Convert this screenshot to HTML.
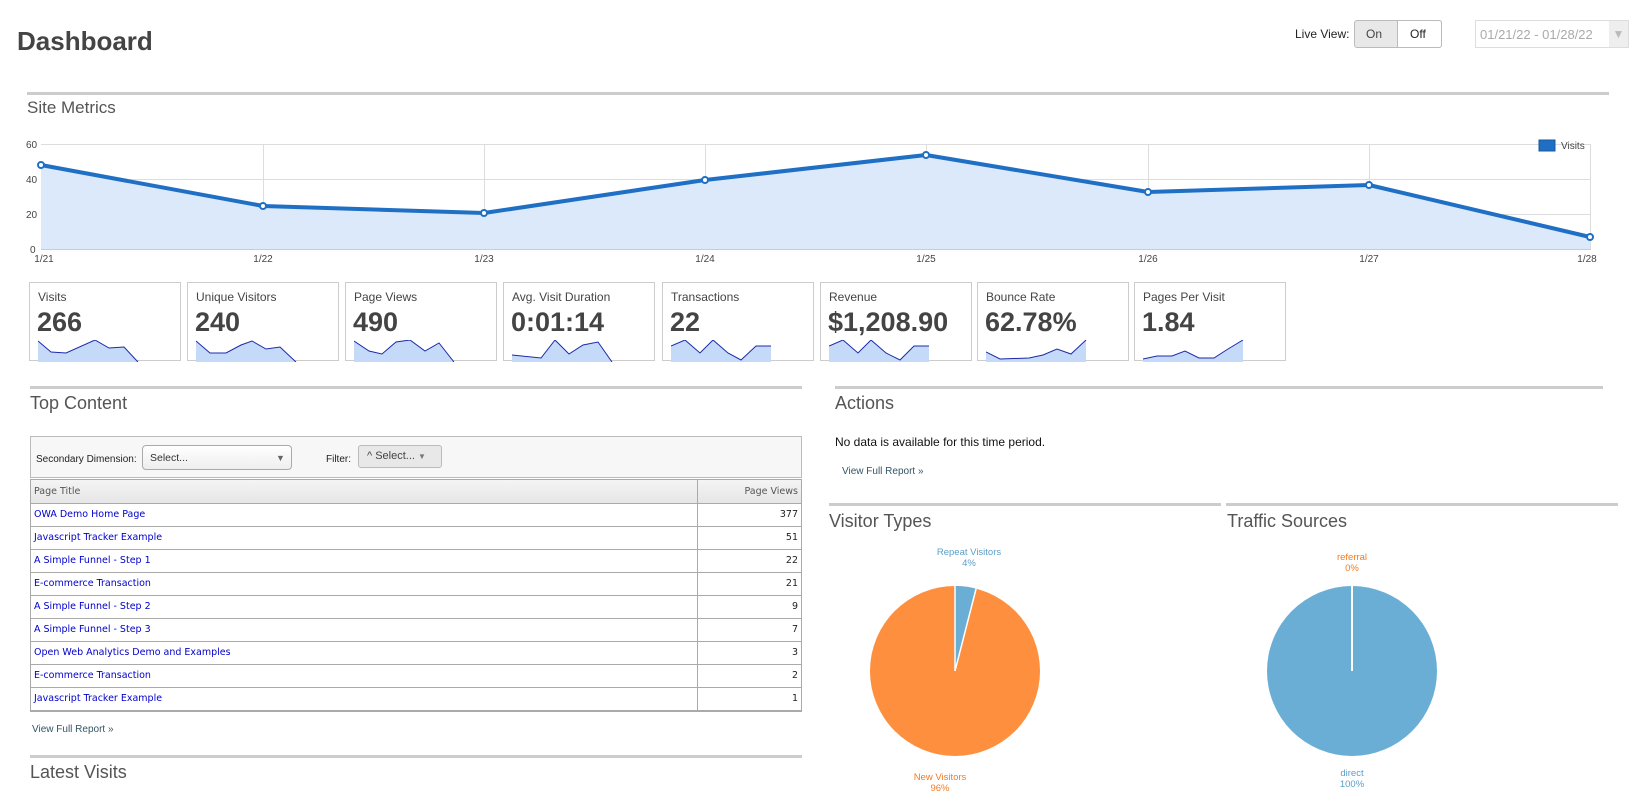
<!DOCTYPE html>
<html><head><meta charset="utf-8">
<style>
*{margin:0;padding:0;box-sizing:border-box}
body{width:1642px;height:802px;background:#fff;font-family:"Liberation Sans",Arial,sans-serif;color:#333;position:relative;overflow:hidden}
.a{position:absolute}
.rule{position:absolute;height:3px;background:#ccc}
.h2{position:absolute;font-size:18px;color:#555}
.box{position:absolute;top:282px;width:152px;height:79px;border:1px solid #ccc;background:#fff}
.box .t{position:absolute;left:8px;top:7px;font-size:12px;color:#444}
.box .n{position:absolute;left:7px;top:24px;font-size:27px;font-weight:bold;color:#444}
.box svg{position:absolute;left:8px;top:57px}
.tbl{position:absolute;left:30px;top:479px;width:772px;border:1px solid #aaa;border-bottom:2px solid #aaa;font-family:"DejaVu Sans",Verdana,sans-serif;font-size:9.5px}
.row{height:23px;border-top:1px solid #aaa;position:relative;line-height:22px}
.row .c1{position:absolute;left:3px;color:#00c}
.row .c2{position:absolute;right:3px;color:#222}
.row .d{position:absolute;left:666px;top:0;bottom:0;border-left:1px solid #aaa}
.link{position:absolute;font-size:10px;color:#356}
</style></head><body>

<div class="a" style="left:17px;top:26px;font-size:26px;font-weight:bold;color:#444">Dashboard</div>
<div class="a" style="left:1295px;top:27px;font-size:12px;color:#222">Live View:</div>
<div class="a" style="left:1354px;top:20px;width:88px;height:28px;border:1px solid #bbb;border-radius:3px;background:#e8e8e8"></div>
<div class="a" style="left:1397px;top:20px;width:45px;height:28px;border:1px solid #bbb;border-radius:0 3px 3px 0;background:#fff"></div>
<div class="a" style="left:1366px;top:27px;font-size:12px;color:#444">On</div>
<div class="a" style="left:1410px;top:27px;font-size:12px;color:#222">Off</div>
<div class="a" style="left:1475px;top:20px;width:154px;height:28px;border:1px solid #ddd;background:#fff"></div>
<div class="a" style="left:1480px;top:27px;font-size:13px;color:#aaa">01/21/22 - 01/28/22</div>
<div class="a" style="left:1609px;top:21px;width:19px;height:26px;background:#eee;color:#bbb;font-size:12px;text-align:center;line-height:26px">▼</div>

<div class="rule" style="left:27px;top:92px;width:1582px"></div>
<div class="h2" style="left:27px;top:98px;font-size:17px">Site Metrics</div>

<svg class="a" style="left:0;top:135px" width="1642" height="135">
<g font-family="Liberation Sans" font-size="10" fill="#444">
<text x="26" y="13">60</text><text x="26" y="48">40</text><text x="26" y="83">20</text><text x="30" y="118">0</text>
</g>
<g stroke="#ddd" stroke-width="1">
<line x1="41" y1="9.5" x2="1591" y2="9.5"/><line x1="41" y1="44.5" x2="1591" y2="44.5"/><line x1="41" y1="79.5" x2="1591" y2="79.5"/>
<line x1="263.5" y1="9" x2="263.5" y2="115"/><line x1="484.5" y1="9" x2="484.5" y2="115"/><line x1="705.5" y1="9" x2="705.5" y2="115"/><line x1="926.5" y1="9" x2="926.5" y2="115"/><line x1="1148.5" y1="9" x2="1148.5" y2="115"/><line x1="1369.5" y1="9" x2="1369.5" y2="115"/><line x1="1590.5" y1="9" x2="1590.5" y2="115"/>
</g>
<polygon fill="#dce9fb" points="41,30 263,71 484,78 705,45 926,20 1148,57 1369,50 1590,102 1590,115 41,115"/>
<line x1="41" y1="114.5" x2="1591" y2="114.5" stroke="#ccc"/>
<polyline fill="none" stroke="#1f6fc5" stroke-width="4" stroke-linejoin="round" points="41,30 263,71 484,78 705,45 926,20 1148,57 1369,50 1590,102"/>
<g fill="#fff" stroke="#1f6fc5" stroke-width="2">
<circle cx="41" cy="30" r="3"/><circle cx="263" cy="71" r="3"/><circle cx="484" cy="78" r="3"/><circle cx="705" cy="45" r="3"/><circle cx="926" cy="20" r="3"/><circle cx="1148" cy="57" r="3"/><circle cx="1369" cy="50" r="3"/><circle cx="1590" cy="102" r="3"/>
</g>
<g font-family="Liberation Sans" font-size="10" fill="#444" text-anchor="middle">
<text x="44" y="127">1/21</text><text x="263" y="127">1/22</text><text x="484" y="127">1/23</text><text x="705" y="127">1/24</text><text x="926" y="127">1/25</text><text x="1148" y="127">1/26</text><text x="1369" y="127">1/27</text><text x="1587" y="127">1/28</text>
</g>
<rect x="1539" y="5" width="16" height="11" fill="#1f6fc5" stroke="#1a5aa0"/>
<text x="1561" y="14" font-family="Liberation Sans" font-size="10" fill="#444">Visits</text>
</svg>

<div class="box" style="left:29px"><div class="t">Visits</div><div class="n">266</div><svg width="102" height="22"><polygon fill="#c5d9f8" points="0,1 13,12 28,13 57,0 71,8 86,7 100,22 0,22"/><polyline fill="none" stroke="#1c2aa8" points="0,1 13,12 28,13 57,0 71,8 86,7 100,22"/></svg></div>
<div class="box" style="left:187px"><div class="t">Unique Visitors</div><div class="n">240</div><svg width="102" height="22"><polygon fill="#c5d9f8" points="0,1 14,13 30,13 45,5 56,1 70,9 84,7 100,22 0,22"/><polyline fill="none" stroke="#1c2aa8" points="0,1 14,13 30,13 45,5 56,1 70,9 84,7 100,22"/></svg></div>
<div class="box" style="left:345px"><div class="t">Page Views</div><div class="n">490</div><svg width="102" height="22"><polygon fill="#c5d9f8" points="0,1 15,11 28,14 42,2 56,0 71,11 85,3 100,22 0,22"/><polyline fill="none" stroke="#1c2aa8" points="0,1 15,11 28,14 42,2 56,0 71,11 85,3 100,22"/></svg></div>
<div class="box" style="left:503px"><div class="t">Avg. Visit Duration</div><div class="n">0:01:14</div><svg width="102" height="22"><polygon fill="#c5d9f8" points="0,15 29,18 43,0 57,14 71,5 86,2 100,22 0,22"/><polyline fill="none" stroke="#1c2aa8" points="0,15 29,18 43,0 57,14 71,5 86,2 100,22"/></svg></div>
<div class="box" style="left:662px"><div class="t">Transactions</div><div class="n">22</div><svg width="102" height="22"><polygon fill="#c5d9f8" points="0,6 14,0 29,13 42,0 57,13 70,20 85,6 100,6 100,22 0,22"/><polyline fill="none" stroke="#1c2aa8" points="0,6 14,0 29,13 42,0 57,13 70,20 85,6 100,6"/></svg></div>
<div class="box" style="left:820px"><div class="t">Revenue</div><div class="n">$1,208.90</div><svg width="102" height="22"><polygon fill="#c5d9f8" points="0,6 14,0 29,13 42,0 57,13 71,20 85,6 100,6 100,22 0,22"/><polyline fill="none" stroke="#1c2aa8" points="0,6 14,0 29,13 42,0 57,13 71,20 85,6 100,6"/></svg></div>
<div class="box" style="left:977px"><div class="t">Bounce Rate</div><div class="n">62.78%</div><svg width="102" height="22"><polygon fill="#c5d9f8" points="0,12 14,19 43,18 57,15 71,9 85,14 100,0 100,22 0,22"/><polyline fill="none" stroke="#1c2aa8" points="0,12 14,19 43,18 57,15 71,9 85,14 100,0"/></svg></div>
<div class="box" style="left:1134px"><div class="t">Pages Per Visit</div><div class="n">1.84</div><svg width="102" height="22"><polygon fill="#c5d9f8" points="0,19 14,16 29,16 42,11 56,18 71,18 85,9 100,0 100,22 0,22"/><polyline fill="none" stroke="#1c2aa8" points="0,19 14,16 29,16 42,11 56,18 71,18 85,9 100,0"/></svg></div>

<div class="rule" style="left:30px;top:386px;width:772px"></div>
<div class="h2" style="left:30px;top:393px">Top Content</div>

<div class="a" style="left:30px;top:436px;width:772px;height:42px;border:1px solid #bbb;background:#f7f7f7"></div>
<div class="a" style="left:36px;top:454px;font-size:10px;color:#222">Secondary Dimension:</div>
<div class="a" style="left:142px;top:445px;width:150px;height:25px;border:1px solid #aaa;border-radius:4px;background:linear-gradient(#fff,#eee)"></div>
<div class="a" style="left:150px;top:452px;font-size:10.5px;color:#333">Select...</div>
<div class="a" style="left:276px;top:453px;font-size:9px;color:#666">▼</div>
<div class="a" style="left:326px;top:454px;font-size:10px;color:#222">Filter:</div>
<div class="a" style="left:358px;top:445px;width:84px;height:23px;border:1px solid #bbb;border-radius:3px;background:#e8e8e8"></div>
<div class="a" style="left:367px;top:450px;font-size:11px;color:#444">^ Select... <span style="font-size:8px;color:#777">▼</span></div>

<div class="tbl">
<div style="height:23px;background:linear-gradient(#f4f4f4,#e6e6e6);position:relative;line-height:23px;color:#555">
<span style="position:absolute;left:3px">Page Title</span><span style="position:absolute;right:3px">Page Views</span><span style="position:absolute;left:666px;top:0;bottom:0;border-left:1px solid #aaa"></span></div>
<div class="row"><span class="c1">OWA Demo Home Page</span><span class="d"></span><span class="c2">377</span></div>
<div class="row"><span class="c1">Javascript Tracker Example</span><span class="d"></span><span class="c2">51</span></div>
<div class="row"><span class="c1">A Simple Funnel - Step 1</span><span class="d"></span><span class="c2">22</span></div>
<div class="row"><span class="c1">E-commerce Transaction</span><span class="d"></span><span class="c2">21</span></div>
<div class="row"><span class="c1">A Simple Funnel - Step 2</span><span class="d"></span><span class="c2">9</span></div>
<div class="row"><span class="c1">A Simple Funnel - Step 3</span><span class="d"></span><span class="c2">7</span></div>
<div class="row"><span class="c1">Open Web Analytics Demo and Examples</span><span class="d"></span><span class="c2">3</span></div>
<div class="row"><span class="c1">E-commerce Transaction</span><span class="d"></span><span class="c2">2</span></div>
<div class="row"><span class="c1">Javascript Tracker Example</span><span class="d"></span><span class="c2">1</span></div>
</div>
<div class="link" style="left:32px;top:724px">View Full Report »</div>

<div class="rule" style="left:30px;top:755px;width:772px"></div>
<div class="h2" style="left:30px;top:762px">Latest Visits</div>

<div class="rule" style="left:835px;top:386px;width:768px"></div>
<div class="h2" style="left:835px;top:393px">Actions</div>
<div class="a" style="left:835px;top:435px;font-size:12px;color:#111">No data is available for this time period.</div>
<div class="link" style="left:842px;top:466px">View Full Report »</div>

<div class="rule" style="left:829px;top:503px;width:392px"></div>
<div class="rule" style="left:1226px;top:503px;width:392px"></div>
<div class="h2" style="left:829px;top:511px">Visitor Types</div>
<div class="h2" style="left:1227px;top:511px">Traffic Sources</div>

<svg class="a" style="left:825px;top:540px" width="800" height="262">
<g font-family="Liberation Sans" font-size="9.5" text-anchor="middle">
<text x="144" y="15" fill="#5a9ec9">Repeat Visitors</text><text x="144" y="26" fill="#5a9ec9">4%</text>
<text x="115" y="240" fill="#f47a20">New Visitors</text><text x="115" y="251" fill="#f47a20">96%</text>
<text x="527" y="20" fill="#f47a20">referral</text><text x="527" y="31" fill="#f47a20">0%</text>
<text x="527" y="236" fill="#5a9ec9">direct</text><text x="527" y="247" fill="#5a9ec9">100%</text>
</g>
<circle cx="130" cy="131" r="85" fill="#fd8f3e"/>
<path d="M130,131 L130,46 A85,85 0 0 1 151.1,48.7 Z" fill="#6aaed6"/>
<line x1="130" y1="131" x2="130" y2="46" stroke="#fff" stroke-width="1.5"/>
<line x1="130" y1="131" x2="151.1" y2="48.7" stroke="#fff" stroke-width="1.5"/>
<circle cx="527" cy="131" r="85" fill="#6aaed6"/>
<line x1="527" y1="131" x2="527" y2="46" stroke="#fff" stroke-width="2"/>
</svg>

</body></html>
